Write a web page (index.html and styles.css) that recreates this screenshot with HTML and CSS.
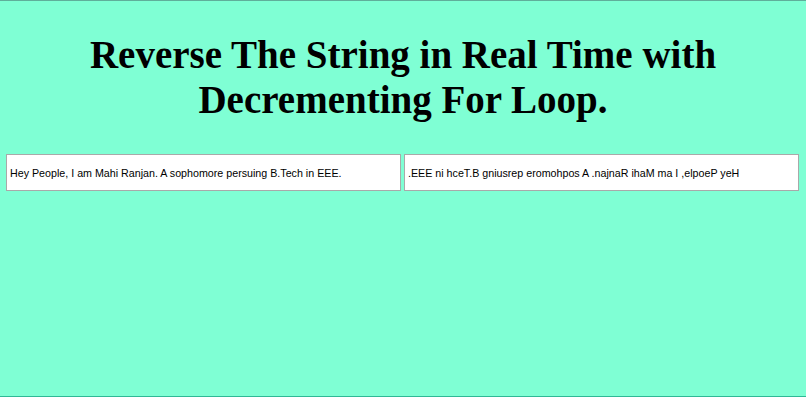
FILE: index.html
```html
<!DOCTYPE html>
<html lang="en">
<head>
    <meta charset="UTF-8">
    <meta name="viewport" content="width=device-width, initial-scale=1.0">
    <title>Reverse String</title>
    <link rel="stylesheet" href="styles.css">
</head>
<body>
    <h1>Reverse The String in Real Time with<br>Decrementing For Loop.</h1>
    <div class="boxes">
        <input type="text" id="original" value="Hey People, I am Mahi Ranjan. A sophomore persuing B.Tech in EEE.">
        <input type="text" id="reversed" readonly>
    </div>

    <script>
        var original = document.getElementById('original');
        var reversed = document.getElementById('reversed');

        function reverseText() {
            var text = original.value;
            var result = '';
            // walk the string backwards
            for (var i = text.length - 1; i >= 0; i--) {
                result += text[i];
            }
            reversed.value = result;
        }

        original.addEventListener('input', reverseText);
        reverseText();
    </script>
</body>
</html>
```

FILE: styles.css
```css
html {
    background-color: aquamarine;
}
body {
    margin: 0;
    min-height: 395px;
    border-top: 1px solid #5fae9a;
    border-bottom: 1px solid #2fb896;
    background-color: aquamarine;
}
h1 {
    font-family: "Liberation Serif", "Times New Roman", serif;
    font-size: 39px;
    line-height: 45px;
    text-align: center;
    margin: 0;
    padding-top: 31px;
}
.boxes {
    display: flex;
    gap: 3px;
    padding: 0 7px 0 6px;
    margin-top: 32px;
}
.boxes input {
    flex: 1;
    min-width: 0;
    height: 37px;
    box-sizing: border-box;
    padding: 0 3px;
    border: 1px solid #a9a9a9;
    background-color: #fff;
    font-family: "Liberation Sans", Arial, sans-serif;
    font-size: 10.7px;
    color: #000;
    outline: none;
}
```
